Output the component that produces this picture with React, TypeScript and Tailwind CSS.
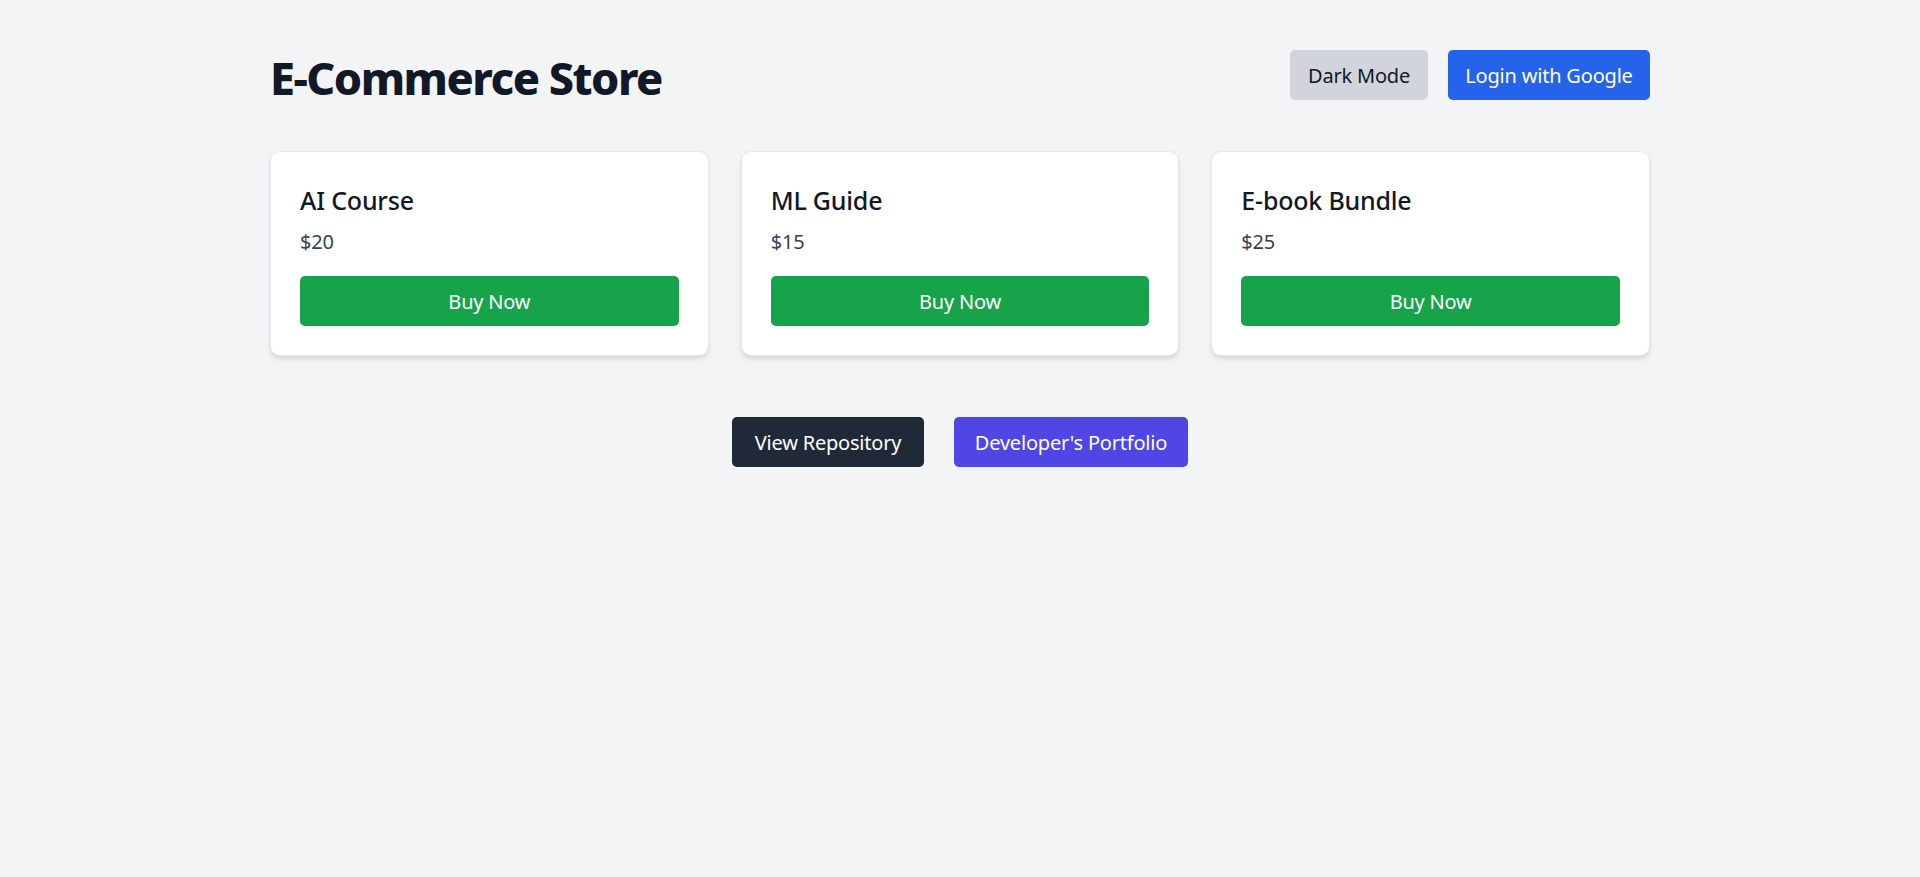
import React from 'react';

type Product = { id: number; name: string; price: number };

const PRODUCTS: Product[] = [
  { id: 1, name: 'AI Course', price: 20 },
  { id: 2, name: 'ML Guide', price: 15 },
  { id: 3, name: 'E-book Bundle', price: 25 },
];

function ProductCard({ product }: { product: Product }) {
  return (
    <div className="bg-white rounded-[10px] border border-[#e5e7eb] shadow-md p-[29px]">
      <h2 className="pt-[2px] text-[25px] leading-[35px] font-medium text-[#111827]">{product.name}</h2>
      <p className="mt-[9px] text-[20px] leading-[30px] text-[#374151]">${product.price}</p>
      <button className="mt-[19px] w-full h-[50px] pt-[2px] rounded-[5px] bg-[#16a34a] text-white text-[20px]">Buy Now</button>
    </div>
  );
}

export default function App() {
  return (
    <div
      className="min-h-screen bg-[#f3f4f6] pt-[50px] tracking-[-0.2px]"
      style={{ fontFamily: '"Noto Sans", "Open Sans", sans-serif' }}
    >
      <div className="mx-auto max-w-[1440px] px-[30px]">
        <header className="flex items-center justify-between h-[50px]">
          <h1 className="mt-[5px] text-[45px] leading-[50px] font-extrabold text-[#111827] tracking-[-1.5px]">E-Commerce Store</h1>
          <div className="flex gap-[20px]">
            <button className="h-[50px] w-[138px] pt-[2px] rounded-[5px] bg-[#d1d5db] text-[#111827] text-[20px]">Dark Mode</button>
            <button className="h-[50px] w-[202px] pt-[2px] rounded-[5px] bg-[#2563eb] text-white text-[20px]">Login with Google</button>
          </div>
        </header>

        <div className="mt-[51px] grid grid-cols-3 gap-[32px]">
          {PRODUCTS.map((p) => (
            <ProductCard key={p.id} product={p} />
          ))}
        </div>

        <div className="mt-[61px] flex justify-center gap-[30px]">
          <button className="h-[50px] w-[192px] pt-[2px] rounded-[5px] bg-[#1f2937] text-white text-[20px]">View Repository</button>
          <button className="h-[50px] w-[234px] pt-[2px] rounded-[5px] bg-[#4f46e5] text-white text-[20px]">Developer's Portfolio</button>
        </div>
      </div>
    </div>
  );
}
